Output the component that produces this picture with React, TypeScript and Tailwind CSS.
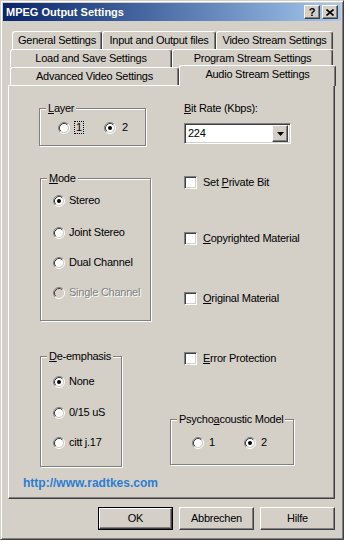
const font = "font-['Liberation_Sans',Arial,sans-serif]";

const raised =
  "border border-t-white border-l-white border-r-[#404040] border-b-[#404040] shadow-[inset_-1px_-1px_0_#808080,inset_1px_1px_0_#d4d0c8]";
const sunken =
  "border border-t-[#808080] border-l-[#808080] border-r-white border-b-white shadow-[inset_1px_1px_0_#404040,inset_-1px_-1px_0_#d4d0c8]";

const Radio = ({ checked, disabled }: { checked?: boolean; disabled?: boolean }) => (
  <svg width="12" height="12" viewBox="0 0 12 12" className="shrink-0">
    <circle cx="6" cy="6" r="4.2" fill={disabled ? "#d4d0c8" : "#fff"} />
    <path d="M2.11 9.89A5.5 5.5 0 0 1 9.89 2.11" fill="none" stroke="#808080" />
    <path d="M9.89 2.11A5.5 5.5 0 0 1 2.11 9.89" fill="none" stroke="#fff" />
    <path d="M2.82 9.18A4.5 4.5 0 0 1 9.18 2.82" fill="none" stroke="#404040" />
    <path d="M9.18 2.82A4.5 4.5 0 0 1 2.82 9.18" fill="none" stroke="#d4d0c8" />
    {checked && <circle cx="6" cy="6" r="2" fill="#000" />}
  </svg>
);

const Check = () => <div className={`w-[13px] h-[13px] shrink-0 bg-white ${sunken}`} />;

const Group = ({
  label,
  className,
  children,
}: {
  label: React.ReactNode;
  className: string;
  children: React.ReactNode;
}) => (
  <div
    className={`relative border border-[#808080] shadow-[1px_1px_0_#fff,inset_1px_1px_0_#fff] ${className}`}
  >
    {/* legend cuts the etched line */}
    <span className="absolute left-[6px] -top-[7px] bg-[#d4d0c8] px-[2px] leading-[13px]">{label}</span>
    {children}
  </div>
);

const RadioRow = ({
  label,
  checked,
  disabled,
  className = "",
}: {
  label: string;
  checked?: boolean;
  disabled?: boolean;
  className?: string;
}) => (
  <div className={`flex items-center gap-[4px] h-[13px] ${className}`}>
    <Radio checked={checked} disabled={disabled} />
    <span className={disabled ? "text-[#808080] [text-shadow:1px_1px_0_#fff]" : ""}>{label}</span>
  </div>
);

const CheckRow = ({ children, className }: { children: React.ReactNode; className: string }) => (
  <div className={`flex items-center gap-[6px] h-[13px] ${className}`}>
    <Check />
    <span>{children}</span>
  </div>
);

const Tab = ({ label, w }: { label: string; w: string }) => (
  <div
    className={`${w} h-[18px] shrink-0 flex items-center justify-center rounded-t-[3px] border border-b-0 border-t-white border-l-white border-r-[#404040] shadow-[inset_-1px_0_0_#808080]`}
  >
    {label}
  </div>
);

const Button = ({ label }: { label: string }) => (
  <div className={`w-[75px] h-[23px] flex items-center justify-center ${raised}`}>{label}</div>
);

export default function App() {
  return (
    <div
      className={`w-[344px] h-[540px] bg-[#d4d0c8] text-black text-[11px] leading-[13px] tracking-[-0.25px] ${font} border border-t-[#d4d0c8] border-l-[#d4d0c8] border-r-[#404040] border-b-[#404040] shadow-[inset_1px_1px_0_#fff,inset_-1px_-1px_0_#808080] p-[2px] flex flex-col`}
    >
      {/* Title bar */}
      <div className="h-[18px] shrink-0 bg-linear-to-r from-[#0a246a] to-[#a6caf0] flex items-center pl-[3px] pr-[3px]">
        <span className="text-white font-bold text-[11px] tracking-normal">MPEG Output Settings</span>
        <div className="ml-auto flex gap-[2px]">
          <div className={`w-[16px] h-[14px] bg-[#d4d0c8] flex items-center justify-center font-bold ${raised}`}>?</div>
          <div className={`w-[16px] h-[14px] bg-[#d4d0c8] flex items-center justify-center ${raised}`}>
            <svg width="8" height="7" viewBox="0 0 8 7">
              <path d="M0.5 0.5L7.5 6.5M7.5 0.5L0.5 6.5" stroke="#000" strokeWidth="1.6" />
            </svg>
          </div>
        </div>
      </div>

      {/* Tab rows */}
      <div className="mt-[10px] ml-[5px] flex flex-col">
        <div className="flex pl-[4px]">
          <Tab label="General Settings" w="w-[90px]" />
          <Tab label="Input and Output files" w="w-[114px]" />
          <Tab label="Video Stream Settings" w="w-[117px]" />
        </div>
        <div className="flex pl-[2px]">
          <Tab label="Load and Save Settings" w="w-[162px]" />
          <Tab label="Program Stream Settings" w="w-[161px]" />
        </div>
        <div className="flex pl-[2px] h-[18px]">
          <Tab label="Advanced Video Settings" w="w-[169px]" />
          <div className="relative z-10 w-[157px] h-[21px] -mt-[2px] shrink-0 bg-[#d4d0c8] flex items-center justify-center pb-[3px] rounded-t-[3px] border border-b-0 border-t-white border-l-white border-r-[#404040] shadow-[inset_-1px_0_0_#808080]">
            Audio Stream Settings
          </div>
        </div>

        {/* Panel */}
        <div className="w-[327px] h-[414px] border border-t-white border-l-white border-r-[#404040] border-b-[#404040] shadow-[inset_-1px_-1px_0_#808080] flex flex-col">
          <div className="flex items-start">
            {/* Left column */}
            <div className="w-[175px] shrink-0 pl-[30px] flex flex-col items-start">
              <Group
                label={<><u>L</u>ayer</>}
                className="mt-[22px] w-[107px] h-[38px] pt-[12px] pl-[18px]"
              >
                <div className="flex items-center h-[13px]">
                  <div className="w-[46px] flex items-center gap-[4px]">
                    <Radio />
                    <span className="border border-dotted border-black px-[1px] leading-[11px]">1</span>
                  </div>
                  <div className="flex items-center gap-[6px]">
                    <Radio checked />
                    <span>2</span>
                  </div>
                </div>
              </Group>

              <Group
                label={<><u>M</u>ode</>}
                className="mt-[32px] ml-[1px] w-[111px] h-[143px] pt-[15px] pl-[12px] flex flex-col"
              >
                <RadioRow label="Stereo" checked />
                <RadioRow label="Joint Stereo" className="mt-[19px]" />
                <RadioRow label="Dual Channel" className="mt-[17px]" />
                <RadioRow label="Single Channel" disabled className="mt-[17px]" />
              </Group>

              <Group
                label={<><u>D</u>e-emphasis</>}
                className="mt-[35px] ml-[1px] w-[82px] h-[111px] pt-[18px] pl-[12px] flex flex-col"
              >
                <RadioRow label="None" checked />
                <RadioRow label="0/15 uS" className="mt-[18px]" />
                <RadioRow label="citt j.17" className="mt-[17px]" />
              </Group>
            </div>

            {/* Right column */}
            <div className="flex flex-col items-start">
              <div className="mt-[16px]">
                <u>B</u>it Rate (Kbps):
              </div>
              <div className={`mt-[8px] w-[107px] h-[21px] bg-white flex items-center pl-[3px] pr-[2px] ${sunken}`}>
                <span>224</span>
                <div className={`ml-auto w-[16px] h-[17px] bg-[#d4d0c8] flex items-center justify-center ${raised}`}>
                  <svg width="7" height="4" viewBox="0 0 7 4">
                    <path d="M0 0H7L3.5 4Z" fill="#000" />
                  </svg>
                </div>
              </div>

              <CheckRow className="mt-[32px]">
                Set <u>P</u>rivate Bit
              </CheckRow>
              <CheckRow className="mt-[43px]">
                <u>C</u>opyrighted Material
              </CheckRow>
              <CheckRow className="mt-[47px]">
                <u>O</u>riginal Material
              </CheckRow>
              <CheckRow className="mt-[47px]">
                <u>E</u>rror Protection
              </CheckRow>

              <Group
                label={<>Psycho<u>a</u>coustic Model</>}
                className="mt-[54px] -ml-[14px] w-[124px] h-[46px] pt-[16px] pl-[21px]"
              >
                <div className="flex items-center h-[13px]">
                  <div className="w-[52px] flex items-center gap-[5px]">
                    <Radio />
                    <span>1</span>
                  </div>
                  <div className="flex items-center gap-[5px]">
                    <Radio checked />
                    <span>2</span>
                  </div>
                </div>
              </Group>
            </div>
          </div>

          <div className="mt-[10px] pl-[14px] font-bold text-[12px] tracking-normal text-[#2a7ed2]">http://www.radtkes.com</div>
        </div>

        {/* Dialog buttons */}
        <div className="mt-[8px] w-[327px] flex justify-end gap-[6px]">
          <div className="border border-black">
            <div className={`w-[73px] h-[21px] flex items-center justify-center ${raised}`}>OK</div>
          </div>
          <Button label="Abbrechen" />
          <Button label="Hilfe" />
        </div>
      </div>
    </div>
  );
}
